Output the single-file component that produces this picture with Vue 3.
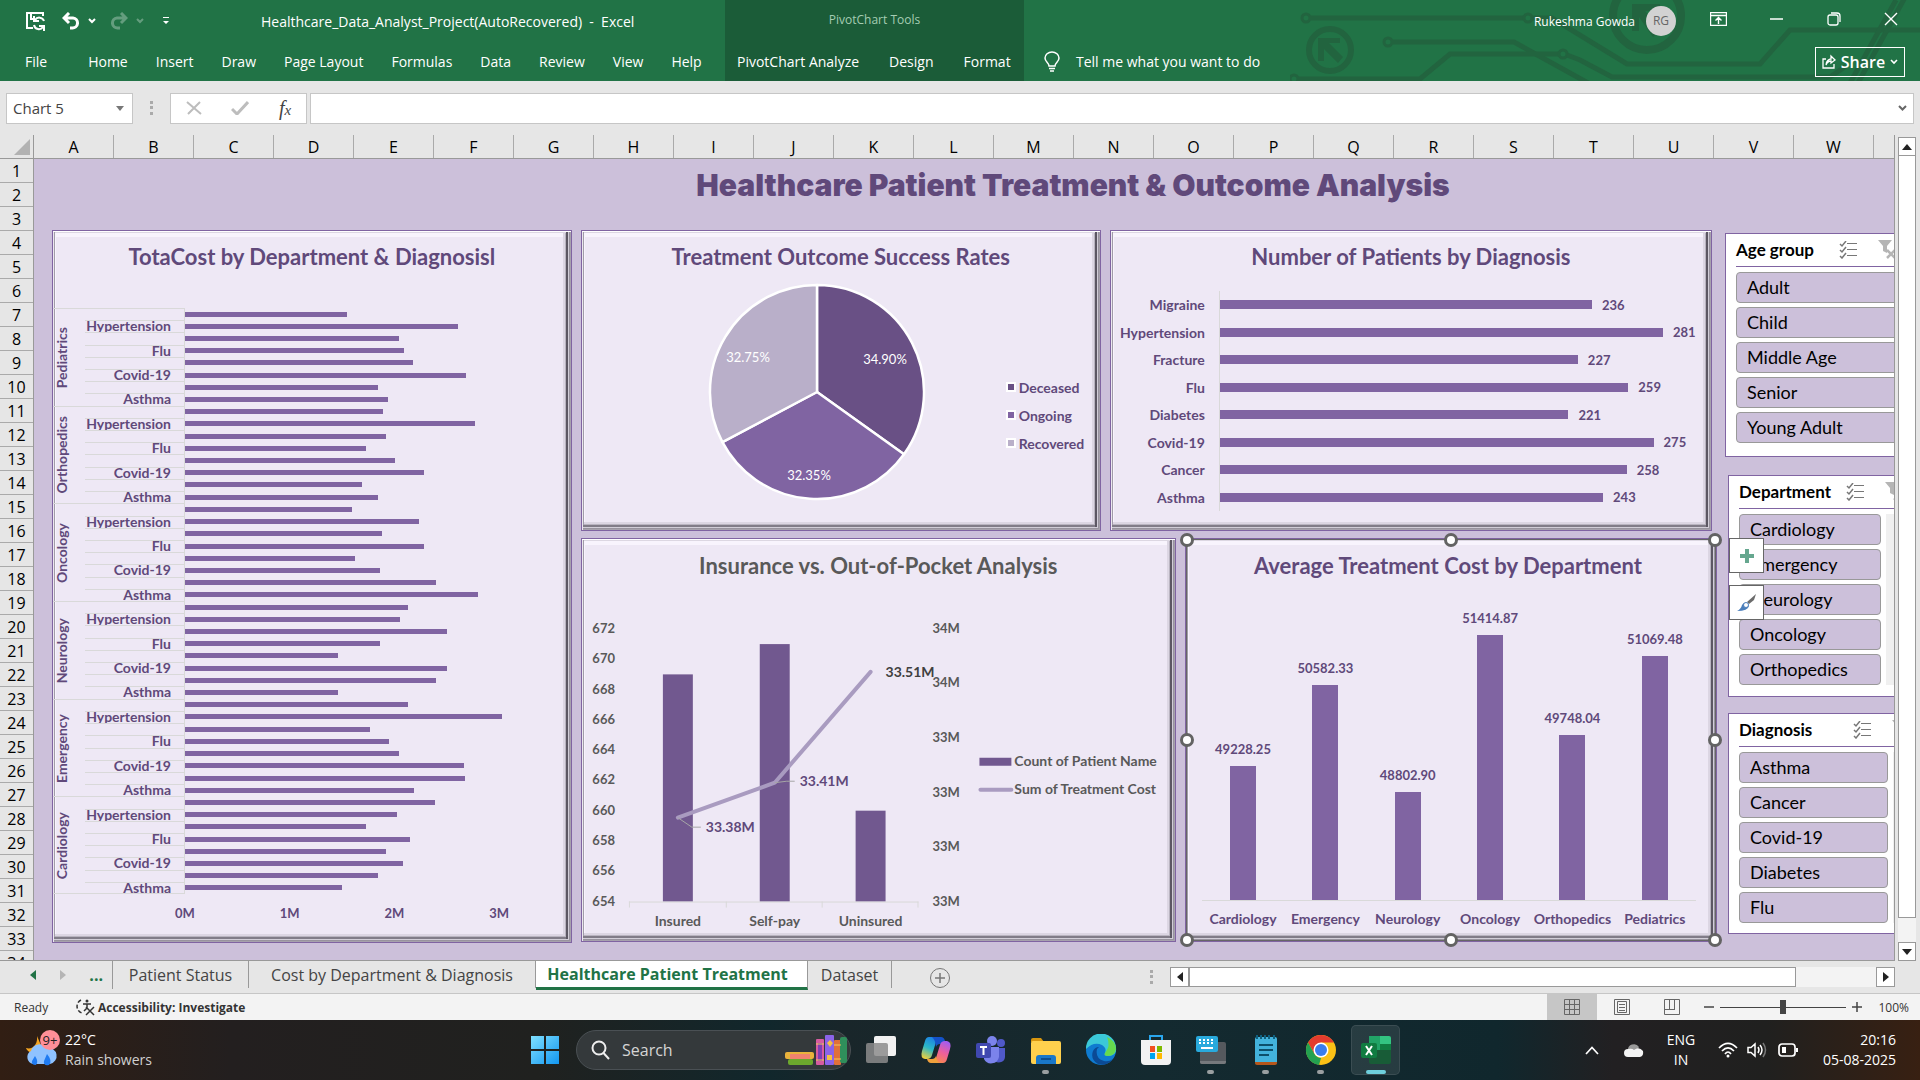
<script setup>
import { ref } from 'vue'

const mainTabs = ['File', 'Home', 'Insert', 'Draw', 'Page Layout', 'Formulas', 'Data', 'Review', 'View', 'Help']
const chartTabs = ['PivotChart Analyze', 'Design', 'Format']
const columns = 'ABCDEFGHIJKLMNOPQRSTUVW'.split('')
const zoom = ref(50)

const diagnoses = ['', 'Hypertension', '', 'Flu', '', 'Covid-19', '', 'Asthma']
const totalCost = [
  { name: 'Pediatrics', values: [1.55, 2.61, 2.04, 2.09, 2.18, 2.68, 1.84, 1.94] },
  { name: 'Orthopedics', values: [1.89, 2.77, 1.92, 1.73, 2.0, 2.28, 1.69, 1.84] },
  { name: 'Oncology', values: [1.59, 2.23, 1.88, 2.28, 1.62, 1.86, 2.4, 2.8] },
  { name: 'Neurology', values: [2.13, 2.05, 2.5, 1.86, 1.46, 2.5, 2.4, 1.46] },
  { name: 'Emergency', values: [2.13, 3.03, 1.77, 1.95, 2.04, 2.66, 2.67, 2.19] },
  { name: 'Cardiology', values: [2.39, 2.02, 1.73, 2.15, 1.92, 2.08, 1.84, 1.5] },
]

const outcomes = [
  { name: 'Deceased', share: 34.9, color: '#695085', x: 178, y: 82 },
  { name: 'Ongoing', share: 32.35, color: '#8064a2', x: 102, y: 198 },
  { name: 'Recovered', share: 32.75, color: '#b9afc9', x: 41, y: 80 },
]
let turned = 0
const point = (share) => {
  const a = (share / 100) * Math.PI * 2
  return `${(110 + 107 * Math.sin(a)).toFixed(1)} ${(110 - 107 * Math.cos(a)).toFixed(1)}`
}
const slices = outcomes.map((o) => {
  const from = point(turned)
  turned += o.share
  return { ...o, d: `M110 110L${from}A107 107 0 0 1 ${point(turned)}Z` }
})

const patients = [
  ['Migraine', 236], ['Hypertension', 281], ['Fracture', 227], ['Flu', 259],
  ['Diabetes', 221], ['Covid-19', 275], ['Cancer', 258], ['Asthma', 243],
]

const countTicks = [672, 670, 668, 666, 664, 662, 660, 658, 656, 654]
const costTicks = ['34M', '34M', '33M', '33M', '33M', '33M']
const payers = [
  { name: 'Insured', count: 669, x: 96 },
  { name: 'Self-pay', count: 671, x: 193 },
  { name: 'Uninsured', count: 660, x: 289 },
]
const barHeight = (count) => ((count - 654) * 273) / 18

const averages = [
  ['Cardiology', '49228.25'], ['Emergency', '50582.33'], ['Neurology', '48802.90'],
  ['Oncology', '51414.87'], ['Orthopedics', '49748.04'], ['Pediatrics', '51069.48'],
]
const averageHeight = (v) => ((Number(v) - 47000) / 5000) * 100

const slicers = [
  { title: 'Age group', kind: 'age', items: ['Adult', 'Child', 'Middle Age', 'Senior', 'Young Adult'] },
  { title: 'Department', kind: 'dept', items: ['Cardiology', 'Emergency', 'Neurology', 'Oncology', 'Orthopedics'] },
  { title: 'Diagnosis', kind: 'diag', items: ['Asthma', 'Cancer', 'Covid-19', 'Diabetes', 'Flu'] },
]
const handles = ['tl', 'tc', 'tr', 'ml', 'mr', 'bl', 'bc', 'br']
</script>

<template>
  <div class="app">
    <header class="ribbon">
      <svg class="circuit" width="630" height="81" viewBox="0 0 630 81" aria-hidden="true">
        <g fill="none" stroke="#22643f" stroke-width="5">
          <circle cx="16" cy="18" r="4" stroke-width="3" /><path d="M21 18H234" />
          <circle cx="238" cy="18" r="4" stroke-width="3" /><path d="M242 18H262L337 64H470L500 30H630" />
          <circle cx="40" cy="50" r="21" stroke-width="6" />
          <circle cx="98" cy="42" r="4" stroke-width="3" /><path d="M103 42H224L298 83" />
          <circle cx="4" cy="79" r="4" stroke-width="3" /><path d="M9 79H130L160 54H269" />
          <circle cx="273" cy="54" r="4" stroke-width="3" /><path d="M277 55L290 60L322 77H540L556 66M560 83L606 0M568 83L630 -30" />
          <circle cx="357" cy="16" r="34" stroke-width="8" />
        </g>
        <path fill="#22643f" d="M28 38h22v5H39l14 14-5 6-14-14v12h-6zM342 4h28v7h-15l15 20-7 6-14-20v14h-7z" />
      </svg>
      <div class="ribbon-main">
        <div class="title-row">
          <div class="quick">
            <button aria-label="Save"><svg width="22" height="20" viewBox="0 0 22 20" fill="none" stroke="#fff" stroke-width="2"><path d="M8 17H2V2H18V5M6 2V8H9" /><path d="M19 10A5 5 0 0 0 10 9M9 14A5 5 0 0 0 18 16M9 5V10H14M19 20V15H14" /></svg></button>
            <button aria-label="Undo"><svg width="18" height="18" viewBox="0 0 18 18" fill="none" stroke="#fff" stroke-width="3"><path d="M7 1L2 6L7 11M2 6H11A5 5 0 0 1 10 16H8" /></svg></button>
            <button aria-label="Undo list"><svg width="8" height="6" viewBox="0 0 8 6" fill="none" stroke="#fff" stroke-width="2"><path d="M1 1L4 4L7 1" /></svg></button>
            <button class="dim" aria-label="Redo"><svg width="18" height="18" viewBox="0 0 18 18" fill="none" stroke="#fff" stroke-width="3"><path d="M11 1L16 6L11 11M16 6H7A5 5 0 0 0 8 16H10" /></svg></button>
            <button class="dim" aria-label="Redo list"><svg width="8" height="6" viewBox="0 0 8 6" fill="none" stroke="#fff" stroke-width="2"><path d="M1 1L4 4L7 1" /></svg></button>
            <button aria-label="Customize"><svg width="8" height="8" viewBox="0 0 8 8"><path fill="#fff" d="M1 0H7V1H1zM1 4H7L4 7z" /></svg></button>
          </div>
          <span class="doc">Healthcare_Data_Analyst_Project(AutoRecovered)&nbsp; -&nbsp; Excel</span>
        </div>
        <nav class="tabs"><button v-for="t in mainTabs" :key="t">{{ t }}</button></nav>
      </div>
      <div class="ribbon-context">
        <div class="context-title">PivotChart Tools</div>
        <nav class="tabs"><button v-for="t in chartTabs" :key="t">{{ t }}</button></nav>
      </div>
      <div class="ribbon-right">
        <div class="window-row">
          <span class="user">Rukeshma Gowda</span>
          <span class="avatar">RG</span>
          <div class="window-buttons">
            <button aria-label="Ribbon display options"><svg width="17" height="14" viewBox="0 0 17 14" fill="none" stroke="#fff"><path d="M.5 .5H16.5V13.5H.5zM.5 3.5H16.5M8.5 12V6M5.5 8.5L8.5 5.5L11.5 8.5" stroke-width="1.4" /></svg></button>
            <button aria-label="Minimize"><svg width="14" height="14" viewBox="0 0 14 14"><path d="M0 7H13" stroke="#fff" stroke-width="1.5" /></svg></button>
            <button aria-label="Restore"><svg width="14" height="14" viewBox="0 0 14 14" fill="none" stroke="#fff" stroke-width="1.3"><rect x="1" y="3" width="10" height="10" rx="2" /><path d="M4 1H10A3 3 0 0 1 13 4V10" /></svg></button>
            <button aria-label="Close"><svg width="14" height="14" viewBox="0 0 14 14"><path d="M1 1L13 13M13 1L1 13" stroke="#fff" stroke-width="1.4" /></svg></button>
          </div>
        </div>
        <div class="tell-row">
          <svg width="16" height="21" viewBox="0 0 16 21" fill="none" stroke="#fff" stroke-width="1.5"><path d="M5 15C5 12 1 11 1 7A7 6 0 0 1 15 7C15 11 11 12 11 15zM5 17.500H11M6 20H10" /></svg>
          <span class="tell">Tell me what you want to do</span>
          <button class="share">
            <svg width="14" height="15" viewBox="0 0 14 15" fill="none" stroke="#fff" stroke-width="1.3"><path d="M4 5H1V14H12V10M4 11C4 7 7 5 9 5V2L13 6L9 9V7C7 7 5 8 4 11z" /></svg>
            Share
            <svg width="8" height="6" viewBox="0 0 8 6" fill="none" stroke="#fff" stroke-width="1.6"><path d="M1 1L4 4L7 1" /></svg>
          </button>
        </div>
      </div>
    </header>

    <section class="formula-bar">
      <div class="name-box">
        <input aria-label="Name box" value="Chart 5" />
        <svg width="8" height="5" viewBox="0 0 8 5"><path fill="#777" d="M0 0H8L4 5z" /></svg>
      </div>
      <svg class="grip" width="3" height="14" viewBox="0 0 3 14"><path fill="#aaa" d="M0 0h3v3H0zM0 5h3v3H0zM0 11h3v3H0z" /></svg>
      <div class="formula-buttons">
        <button aria-label="Cancel"><svg width="16" height="14" viewBox="0 0 16 14"><path d="M1 1L15 13M14 1L2 13" stroke="#bdbdbd" stroke-width="2" /></svg></button>
        <button aria-label="Enter"><svg width="18" height="14" viewBox="0 0 18 14"><path d="M1 8L6 13L17 1" fill="none" stroke="#bdbdbd" stroke-width="3" /></svg></button>
        <button class="fx" aria-label="Insert function">f<small>x</small></button>
      </div>
      <div class="formula-input">
        <input aria-label="Formula" />
        <svg width="9" height="6" viewBox="0 0 9 6"><path d="M1 1L4.500 4.500L8 1" fill="none" stroke="#666" stroke-width="2" /></svg>
      </div>
    </section>

    <main class="workbook">
      <div class="grid-area">
        <div class="col-head">
          <div class="corner"><svg width="16" height="16" viewBox="0 0 16 16"><path fill="#b2b2b2" d="M16 0V16H0z" /></svg></div>
          <div v-for="c in columns" :key="c" class="col">{{ c }}</div>
        </div>
        <div class="grid-body">
          <div class="row-head"><div v-for="r in 34" :key="r" class="row">{{ r }}</div></div>
          <div class="sheet">
            <h1>Healthcare Patient Treatment &amp; Outcome Analysis</h1>
            <div class="dashboard">
              <section class="panel total">
                <h2>TotaCost by Department &amp; Diagnosisl</h2>
                <div class="total-body">
                  <div v-for="g in totalCost" :key="g.name" class="group">
                    <div class="group-name"><span>{{ g.name }}</span></div>
                    <div class="group-rows">
                      <div v-for="(v, i) in g.values" :key="i" class="cost-row">
                        <div class="cost-label">{{ diagnoses[i] }}</div>
                        <div class="cost-track"><div class="cost-bar" :style="{ width: (v / 3.5) * 100 + '%' }"></div></div>
                      </div>
                    </div>
                  </div>
                </div>
                <div class="total-axis"><span>0M</span><span>1M</span><span>2M</span><span>3M</span></div>
              </section>

              <div class="charts">
                <div class="charts-top">
                  <section class="panel outcome">
                    <h2>Treatment Outcome Success Rates</h2>
                    <div class="pie-body">
                      <svg width="220" height="220" viewBox="0 0 220 220">
                        <path v-for="s in slices" :key="s.name" :d="s.d" :fill="s.color" stroke="#fff" stroke-width="2.500" stroke-linejoin="round" />
                        <text v-for="s in slices" :key="s.name" :x="s.x" :y="s.y" class="pie-label">{{ s.share.toFixed(2) }}%</text>
                      </svg>
                      <ul class="pie-legend">
                        <li v-for="s in slices" :key="s.name"><i :style="{ background: s.color }"></i>{{ s.name }}</li>
                      </ul>
                    </div>
                  </section>
                  <section class="panel patients">
                    <h2>Number of Patients by Diagnosis</h2>
                    <div class="patients-body">
                      <div v-for="[name, n] in patients" :key="name" class="patient-row">
                        <div class="patient-label">{{ name }}</div>
                        <div class="patient-track">
                          <div class="patient-bar" :style="{ width: (n / 300) * 100 + '%' }"></div><span>{{ n }}</span>
                        </div>
                      </div>
                    </div>
                  </section>
                </div>
                <div class="charts-bottom">
                  <section class="panel insurance">
                    <h2>Insurance vs. Out-of-Pocket Analysis</h2>
                    <svg class="combo" viewBox="0 0 594 345">
                      <text v-for="(t, i) in countTicks" :key="t" x="33" :y="42 + (i * 273) / 9" text-anchor="end">{{ t }}</text>
                      <text v-for="(t, i) in costTicks" :key="i" x="351" :y="42 + (i * 273) / 5">{{ t }}</text>
                      <g v-for="p in payers" :key="p.name">
                        <rect :x="p.x - 15" :y="311 - barHeight(p.count)" width="30" :height="barHeight(p.count)" fill="#71588f" />
                        <text class="name" :x="p.x" y="335" text-anchor="middle">{{ p.name }}</text>
                      </g>
                      <path d="M47 311.500H337M47.500 311V317M144.500 311V317M240.500 311V317M336.500 311V317" stroke="#d9d9d9" fill="none" />
                      <path d="M96 227L193 192L289 81" fill="none" stroke="#a99bc0" stroke-width="4" stroke-linecap="round" stroke-linejoin="round" />
                      <path d="M96 227L110 236.500H119M193 192L205 190.500H213" fill="none" stroke="#a6a6a6" />
                      <text class="violet" x="124" y="241">33.38M</text>
                      <text class="violet" x="218" y="195">33.41M</text>
                      <text class="dark" x="304" y="86">33.51M</text>
                      <rect x="398" y="167" width="32" height="8" fill="#71588f" />
                      <path d="M399 199H430" stroke="#a99bc0" stroke-width="4" stroke-linecap="round" />
                      <text class="name" x="433" y="175">Count of Patient Name</text>
                      <text class="name" x="433" y="203">Sum of Treatment Cost</text>
                    </svg>
                  </section>
                  <section class="panel average">
                    <h2>Average Treatment Cost by Department</h2>
                    <div class="average-body">
                      <div v-for="[name, v] in averages" :key="name" class="average-col">
                        <div class="average-plot">
                          <span>{{ v }}</span>
                          <div class="average-bar" :style="{ height: averageHeight(v) + '%' }"></div>
                        </div>
                        <div class="average-name">{{ name }}</div>
                      </div>
                    </div>
                    <div class="selection"><i v-for="h in handles" :key="h" :class="h"></i></div>
                    <div class="chart-tools">
                      <button aria-label="Chart elements"><svg width="14" height="14" viewBox="0 0 14 14"><path fill="#66a78f" d="M5 0h4v5h5v4H9v5H5V9H0V5h5z" /></svg></button>
                      <button aria-label="Chart styles"><svg width="20" height="18" viewBox="0 0 20 18"><path fill="#6b6b6b" d="M19 0L17 6L12 10L10 8z" /><path fill="#4a7ebb" d="M9 9L12 12Q11 17 0 17Q4 15 5 11Q7 8 9 9z" /><circle cx="9" cy="11" r="2.500" fill="#fff" stroke="#4a7ebb" /></svg></button>
                    </div>
                  </section>
                </div>
              </div>

              <aside class="slicers">
                <section v-for="s in slicers" :key="s.title" class="slicer" :class="s.kind">
                  <header>
                    <h3>{{ s.title }}</h3>
                    <button aria-label="Multi-select"><svg width="18" height="18" viewBox="0 0 18 18" fill="none" stroke="#777"><path d="M8 2.500H18M8 8.500H18M8 14.500H18" /><path d="M1 3L3 5L7 0M1 9L3 11L7 6M1 15L3 17L7 12" stroke-width="1.500" /></svg></button>
                    <button aria-label="Clear filter"><svg width="20" height="19" viewBox="0 0 20 19"><path fill="#b5b5b5" d="M0 0H14L9 6V13L5 11V6z" /><path d="M9 10L17 18M17 10L9 18" stroke="#b5b5b5" stroke-width="2.500" /></svg></button>
                  </header>
                  <div class="slicer-body">
                    <div class="slicer-list"><button v-for="i in s.items" :key="i">{{ i }}</button></div>
                    <div v-if="s.kind !== 'age'" class="slicer-scroll"></div>
                  </div>
                </section>
              </aside>
            </div>
          </div>
        </div>
      </div>
      <div class="vscroll">
        <button aria-label="Scroll up"><svg width="10" height="6" viewBox="0 0 10 6"><path fill="#222" d="M5 0L10 6H0z" /></svg></button>
        <div class="thumb"></div>
        <button aria-label="Scroll down"><svg width="10" height="6" viewBox="0 0 10 6"><path fill="#222" d="M0 0H10L5 6z" /></svg></button>
      </div>
    </main>

    <footer class="sheet-tabs">
      <div class="nav-arrows">
        <button aria-label="Previous sheet"><svg width="6" height="10" viewBox="0 0 6 10"><path fill="#217346" d="M6 0V10L0 5z" /></svg></button>
        <button aria-label="Next sheet"><svg width="6" height="10" viewBox="0 0 6 10"><path fill="#b5b5b5" d="M0 0V10L6 5z" /></svg></button>
        <button class="more" aria-label="More sheets">...</button>
      </div>
      <button class="tab status-tab">Patient Status</button>
      <button class="tab cost-tab">Cost by Department &amp; Diagnosis</button>
      <button class="tab active">Healthcare Patient Treatment</button>
      <button class="tab data-tab">Dataset</button>
      <button class="add" aria-label="New sheet"><svg width="22" height="22" viewBox="0 0 22 22" fill="none" stroke="#777"><circle cx="11" cy="11" r="9.500" /><path d="M11 6V16M6 11H16" stroke-width="1.500" /></svg></button>
      <div class="hscroll">
        <svg width="3" height="14" viewBox="0 0 3 14"><path fill="#aaa" d="M0 0h3v3H0zM0 5h3v3H0zM0 11h3v3H0z" /></svg>
        <div class="htrack">
          <button aria-label="Scroll left"><svg width="6" height="10" viewBox="0 0 6 10"><path fill="#222" d="M6 0V10L0 5z" /></svg></button>
          <div class="hthumb"></div>
          <button aria-label="Scroll right"><svg width="6" height="10" viewBox="0 0 6 10"><path fill="#222" d="M0 0V10L6 5z" /></svg></button>
        </div>
      </div>
    </footer>

    <div class="statusbar">
      <span class="ready">Ready</span>
      <svg width="20" height="18" viewBox="0 0 20 18" fill="none" stroke="#333" stroke-width="1.500"><path d="M5 2A7 7 0 0 0 6 15" stroke-dasharray="4 2" /><circle cx="11" cy="3" r="1.500" fill="#333" stroke="none" /><path d="M7 6H15M11 6V10L8 13M10 9L18 17M18 9L10 17" /></svg>
      <strong>Accessibility: Investigate</strong>
      <div class="views">
        <button class="on" aria-label="Normal view"><svg width="18" height="16" viewBox="0 0 18 16" fill="none" stroke="#666"><path d="M1.500 .5H16.500V15.500H1.500zM6.500 0V16M11.500 0V16M1 5.500H17M1 10.500H17" /></svg></button>
        <button aria-label="Page layout view"><svg width="18" height="16" viewBox="0 0 18 16" fill="none" stroke="#666"><path d="M1.500 .5H16.500V15.500H1.500zM4.500 2.500H13.500V13.500H4.500zM6 5.500H12M6 8.500H12M6 11.500H12" /></svg></button>
        <button aria-label="Page break view"><svg width="18" height="16" viewBox="0 0 18 16" fill="none" stroke="#666"><path d="M1.500 .5H16.500V15.500H1.500zM6.500 0V10.500M11.500 0V10.500M2 10.500H12" /></svg></button>
      </div>
      <button class="zoom-btn" aria-label="Zoom out"><svg width="10" height="10" viewBox="0 0 10 10"><path d="M0 5H10" stroke="#444" stroke-width="1.500" /></svg></button>
      <input v-model="zoom" type="range" min="0" max="100" aria-label="Zoom" />
      <button class="zoom-btn" aria-label="Zoom in"><svg width="10" height="10" viewBox="0 0 10 10"><path d="M0 5H10M5 0V10" stroke="#444" stroke-width="1.500" /></svg></button>
      <span class="percent">100%</span>
    </div>

    <div class="taskbar">
      <div class="weather">
        <svg width="36" height="40" viewBox="0 0 36 40"><path fill="#f5a623" d="M12 6C13 14 8 20 1 18C3 24 14 26 18 20z" /><path fill="#8fc2ff" d="M8 34A7 7 0 0 1 6 21A9 9 0 0 1 22 18A8 8 0 0 1 25 34z" /><path fill="#1f7bf2" d="M10 26Q14 32 11 35Q6 35 7 31zM22 24Q28 31 24 35Q18 36 19 31z" /><circle cx="25" cy="10" r="10" fill="#ff8f98" /><text x="25" y="15" text-anchor="middle" font-size="13" fill="#222">9+</text></svg>
        <div><div>22°C</div><div class="soft">Rain showers</div></div>
      </div>
      <div class="apps">
        <button class="start" aria-label="Start"><svg width="30" height="30" viewBox="0 0 30 30"><defs><linearGradient id="win" x1="0" y1="0" x2="1" y2="1"><stop offset="0" stop-color="#7fe0ff" /><stop offset="1" stop-color="#1296f0" /></linearGradient></defs><path fill="url(#win)" d="M1 1h13v13H1zM16 1h13v13H16zM1 16h13v13H1zM16 16h13v13H16z" /></svg></button>
        <div class="search">
          <svg width="19" height="20" viewBox="0 0 19 20" fill="none" stroke="#eee" stroke-width="2"><circle cx="8" cy="8" r="6.500" /><path d="M12.500 13L18 19" /></svg>
          <input aria-label="Search" placeholder="Search" />
          <svg width="62" height="30" viewBox="0 0 62 30"><rect x="0" y="17" width="29" height="7" rx="2" fill="#e9b23c" /><rect x="5" y="19" width="20" height="5" fill="#f0826f" /><rect x="3" y="24" width="25" height="6" rx="2" fill="#6ca82d" /><rect x="31" y="4" width="8" height="26" rx="1" fill="#d75ba0" /><rect x="33" y="8" width="4" height="18" fill="#7f3fb5" /><rect x="40" y="0" width="9" height="30" rx="1" fill="#8b63e8" /><path fill="#f5c242" d="M42 8l3-3 3 3-3 4zM42 20h5v5h-5z" /><rect x="49" y="5" width="7" height="25" rx="1" fill="#e0703a" /><rect x="55" y="2" width="7" height="26" rx="2" fill="#2f8f5b" /><path stroke="#f4c95b" d="M49 10h7M49 24h7M31 9h8M31 25h8" /></svg>
        </div>
        <button aria-label="Task view"><svg width="32" height="32" viewBox="0 0 32 32"><rect x="9" y="2" width="22" height="20" rx="2" fill="#f1f1f1" /><rect x="1" y="9" width="22" height="20" rx="2" fill="#8c8c8c" opacity=".85" /></svg></button>
        <button aria-label="Copilot">
          <svg width="32" height="32" viewBox="0 0 32 32">
            <defs>
              <linearGradient id="cop-a" x1="0.6" y1="0" x2="0.2" y2="1"><stop offset="0" stop-color="#1c7fe6" /><stop offset=".5" stop-color="#2bb8c8" /><stop offset="1" stop-color="#f2d03a" /></linearGradient>
              <linearGradient id="cop-b" x1="0.7" y1="0" x2="0.3" y2="1"><stop offset="0" stop-color="#a25cf0" /><stop offset=".5" stop-color="#ee5f9b" /><stop offset="1" stop-color="#f98a4a" /></linearGradient>
            </defs>
            <path fill="url(#cop-a)" d="M9 3h11q-3 1-4 5l-4 13q-1 4-5 4H5q-5-1-3-8l3-10q1-4 4-4z" />
            <path fill="#1552c8" d="M12 3h9q3 0 4 4l1 3h-6q-3 0-4 3-1-8-4-10z" />
            <path fill="url(#cop-b)" d="M23 29H12q3-1 4-5l4-13q1-4 5-4h2q5 1 3 8l-3 10q-1 4-4 4z" />
            <path fill="#f0a03c" d="M20 29h-9q-3 0-4-4h5q3 0 4-3 1 6 4 7z" />
          </svg>
        </button>
        <button aria-label="Teams"><svg width="32" height="32" viewBox="0 0 32 32"><circle cx="17" cy="7" r="5" fill="#7b83eb" /><circle cx="26" cy="9" r="4" fill="#5059c9" /><path fill="#5059c9" d="M20 14h10v9a6 6 0 0 1-10 4z" /><path fill="#7b83eb" d="M9 13h15v10a8 8 0 0 1-15 2z" /><rect x="1" y="9" width="15" height="15" rx="2" fill="#4048b0" /><path d="M5 13h7M8.500 13v8" stroke="#fff" stroke-width="2" /></svg></button>
        <button class="run" aria-label="File Explorer"><svg width="32" height="32" viewBox="0 0 32 32"><path fill="#d8960f" d="M1 6q0-2 2-2h8l3 4H1z" /><rect x="1" y="7" width="30" height="23" rx="2" fill="#ffd04d" /><path fill="#1a78c9" d="M6 30v-6q0-3 3-3h14q3 0 3 3v6z" /><path d="M11 25h10" stroke="#0c4f91" stroke-width="2" /></svg></button>
        <button aria-label="Edge"><svg width="32" height="32" viewBox="0 0 32 32"><circle cx="16" cy="16" r="15" fill="#0f7bd0" /><path fill="#3bc8d8" d="M1 15A15 15 0 0 1 31 14q1 7-7 8-5 0-4-3 2-5-3-8-8-4-16 4z" /><path fill="#66d94e" d="M22 3q9 4 9 12-1 7-8 7-5 0-3-3 6-7 2-16z" /><path fill="#0b4a95" d="M12 15q-2 10 7 12 5 1 9-2-7 8-15 5-8-5-5-13 2-4 6-4z" /></svg></button>
        <button aria-label="Store"><svg width="32" height="32" viewBox="0 0 32 32"><path d="M10 6V2H22V6" fill="none" stroke="#2aa7ee" stroke-width="2" /><path fill="#f2f2f2" d="M1 6h30v21q0 4-4 4H5q-4 0-4-4z" /><path fill="#f25022" d="M10 12h5v6h-5z" /><path fill="#7fba00" d="M17 12h5v6h-5z" /><path fill="#00a4ef" d="M10 19h5v6h-5z" /><path fill="#ffb900" d="M17 19h5v6h-5z" /></svg></button>
        <button class="run" aria-label="On-screen keyboard"><svg width="32" height="32" viewBox="0 0 32 32"><rect x="5" y="8" width="26" height="22" rx="2" fill="#55595e" /><path fill="#76797d" d="M5 27h26v1q0 2-2 2H7q-2 0-2-2z" /><rect x="1" y="2" width="22" height="16" rx="2" fill="#29a9dc" /><path d="M4 6h16M4 9h16" stroke="#fff" stroke-width="2" stroke-dasharray="2 2" /><path d="M6 14h12" stroke="#fff" stroke-width="2" /></svg></button>
        <button class="run" aria-label="Notepad"><svg width="32" height="32" viewBox="0 0 32 32"><rect x="5" y="3" width="22" height="27" rx="2" fill="#43b3dc" /><path fill="#b5561b" d="M5 28h22v1q0 2-2 2H7q-2 0-2-2z" /><path d="M7 1v4M11 1v4M15 1v4M19 1v4M24 1v4" stroke="#0f607f" stroke-width="2" /><path d="M9 11h14M9 16h14M9 21h10" stroke="#0d506b" stroke-width="2" /></svg></button>
        <button class="run" aria-label="Chrome"><svg width="32" height="32" viewBox="0 0 32 32"><circle cx="16" cy="16" r="15" fill="#fbc116" /><path fill="#e33b2e" d="M3 8.500A15 15 0 0 1 29 8.500H16L9.500 20z" /><path fill="#23a150" d="M3 8.500L9.500 20Q12 24 16 24L14 31A15 15 0 0 1 3 8.500z" /><circle cx="16" cy="16" r="7.500" fill="#fff" /><circle cx="16" cy="16" r="6" fill="#3b7ded" /></svg></button>
        <button class="run current" aria-label="Excel"><svg width="32" height="32" viewBox="0 0 32 32"><path fill="#21a366" d="M9 2h11v14H9z" /><path fill="#33c481" d="M20 2h9q2 0 2 2v6H20z" /><path fill="#107c41" d="M20 10h11v8H20z" /><path fill="#185c37" d="M9 16h22v12q0 2-2 2H11q-2 0-2-2z" /><rect x="1" y="9" width="16" height="15" rx="2" fill="#107c41" /><path d="M6 12l6 9M12 12l-6 9" stroke="#fff" stroke-width="2" /></svg></button>
      </div>
      <div class="tray">
        <svg width="14" height="9" viewBox="0 0 14 9" fill="none" stroke="#fff" stroke-width="1.700"><path d="M1 8L7 1.500L13 8" /></svg>
        <svg class="cloud" width="21" height="14" viewBox="0 0 21 14"><path fill="#9a9a9a" d="M5 8A6 6 0 0 1 16 4L13 9z" /><path fill="#f4f4f4" d="M5 14A4 4 0 0 1 5 6Q9 5 11 7Q16 3 20 8Q21 13 17 14z" /></svg>
        <div class="lang"><div>ENG</div><div>IN</div></div>
        <svg width="20" height="16" viewBox="0 0 20 16" fill="none" stroke="#fff" stroke-width="1.700"><path d="M1 6Q10-3 19 6M4 9Q10 3 16 9M7 12Q10 8 13 12" /><circle cx="10" cy="14" r="1.500" fill="#fff" stroke="none" /></svg>
        <svg class="sound" width="20" height="16" viewBox="0 0 20 16" fill="none" stroke="#fff" stroke-width="1.500"><path d="M1 5.500H4L8 2V14L4 10.500H1zM11 5Q13 8 11 11M13 3Q17 8 13 13" /><path d="M16 1Q21 8 16 15" stroke="#777" /></svg>
        <svg class="battery" width="21" height="14" viewBox="0 0 21 14" fill="none" stroke="#fff" stroke-width="1.700"><rect x="1" y="1" width="16" height="12" rx="3" /><path d="M19 5V9" stroke-width="2" /><rect x="4" y="4" width="4" height="6" fill="#fff" stroke="none" /></svg>
        <div class="clock"><div>20:16</div><div>05-08-2025</div></div>
      </div>
    </div>
  </div>
</template>

<style>
body { margin: 0; background: #e6e6e6; }
</style>

<style scoped>
* { box-sizing: border-box; }
.app { display: flex; flex-direction: column; min-height: 100vh; font-family: "Open Sans", "Noto Sans", sans-serif; color: #222; overflow: hidden; }
button { border: 0; background: none; padding: 0; margin: 0; font: inherit; color: inherit; display: flex; align-items: center; justify-content: center; }
input { font: inherit; color: inherit; border: 0; background: none; min-width: 0; outline: none; }
h1, h2, h3, ul { margin: 0; padding: 0; }
svg { flex-shrink: 0; }

.ribbon { position: relative; display: flex; height: 81px; background: #217346; color: #fff; font-size: 14px; }
.circuit { position: absolute; right: 0; top: 0; }
.ribbon-main { width: 725px; }
.ribbon-context { width: 299px; background: #1b5c38; }
.ribbon-right { position: relative; flex: 1; }
.title-row { display: flex; height: 42px; align-items: center; padding-left: 25px; }
.quick { display: flex; align-items: center; width: 236px; }
.quick button { margin-right: 8px; }
.quick button:nth-child(1) { margin-right: 15px; }
.quick button:nth-child(3) { margin-right: 14px; }
.quick button:nth-child(5) { margin-right: 18px; }
.dim { opacity: .3; }
.doc { white-space: nowrap; }
.tabs { display: flex; height: 39px; align-items: center; padding-left: 11px; }
.tabs button { padding: 0 14px; height: 39px; white-space: nowrap; }
.ribbon-main .tabs button:first-child { margin-right: 13px; }
.ribbon-context .tabs { padding-left: 0; gap: 6px; }
.ribbon-context .tabs button { padding: 0 12px; }
.context-title { height: 42px; line-height: 40px; text-align: center; font-size: 12px; color: #a5cdb3; }
.window-row { display: flex; align-items: center; justify-content: flex-end; height: 42px; padding-right: 22px; }
.user { font-size: 12px; }
.avatar { width: 30px; height: 30px; border-radius: 50%; background: #d2d2d2; color: #666; font-size: 12px; line-height: 30px; text-align: center; margin-left: 11px; }
.window-buttons { display: flex; align-items: center; gap: 43px; margin-left: 34px; height: 38px; align-self: flex-start; }
.tell-row { display: flex; align-items: center; height: 39px; padding: 0 15px 0 20px; }
.tell { margin-left: 16px; flex: 1; }
.share { width: 90px; height: 30px; border: 1px solid #fff; font-size: 16px; font-weight: 600; gap: 5px; }

.formula-bar { display: flex; align-items: center; height: 54px; padding: 0 6px; background: #e6e6e6; font-size: 15px; color: #444; }
.name-box { display: flex; align-items: center; width: 127px; height: 31px; border: 1px solid #c6c6c6; background: #fff; padding: 0 8px 0 6px; }
.name-box input { flex: 1; padding: 0; }
.grip { margin: 0 17px; }
.formula-buttons { display: flex; align-items: center; justify-content: space-around; width: 137px; height: 31px; border: 1px solid #c6c6c6; background: #fff; }
.fx { font-family: "Liberation Serif", serif; font-style: italic; font-size: 20px; color: #444; }
.fx small { font-size: 15px; padding-top: 5px; }
.formula-input { flex: 1; display: flex; align-items: center; height: 31px; border: 1px solid #c6c6c6; background: #fff; margin-left: 3px; padding-right: 6px; }
.formula-input input { flex: 1; }

.workbook { flex: 1; display: flex; background: #e6e6e6; height: 826px; }
.grid-area { flex: 1; min-width: 0; border-right: 1px solid #999; overflow: hidden; }
.col-head { display: flex; height: 24px; font-size: 16px; line-height: 24px; color: #000; border-bottom: 1px solid #999; overflow: hidden; }
.corner { width: 34px; flex: none; padding: 4px 0 0 14px; line-height: 0; border-right: 1px solid #999; }
.col { width: 80px; flex: none; text-align: center; border-right: 1px solid #aaa; }
.grid-body { display: flex; height: 802px; overflow: hidden; border-bottom: 1px solid #999; }
.row-head { width: 34px; flex: none; border-right: 1px solid #999; font-size: 16px; color: #000; }
.row { height: 24px; line-height: 25px; text-align: center; border-bottom: 1px solid #aaa; }
.sheet { flex: 1; min-width: 0; background: #ccc0da; overflow: hidden; }
h1 { height: 71px; line-height: 52px; padding-left: 218px; text-align: center; white-space: nowrap; font-family: Inter, sans-serif; font-weight: 900; font-size: 30px; color: #60497a; }
.dashboard { display: grid; grid-template-columns: minmax(0, 520fr) minmax(0, 1154fr) 169px; align-items: start; padding-left: 18px; }

.panel { position: relative; background: #eee8f5; border: 1px solid #8064a2; display: flex; flex-direction: column; font: bold 14px Lato, sans-serif; color: #60497a;
  box-shadow: inset 0 1px 0 #fff, inset 1px 0 0 #ece8f0, inset -1px -1px 0 #a6a1ac, inset -2px -2px 0 #98939e, inset -3px -3px 0 #d2ced8, inset -5px 0 0 #5c5763, inset 0 -5px 0 #817c88, inset 2px 0 0 #a19ca8, inset 0 2px 0 #dcd7e2, inset -6px -6px 0 #b9b4c0, inset -8px -8px 0 #dcd6e3, inset 3px 6px 0 #f8f4fd; }
h2 { margin-top: 13px; font-size: 22px; line-height: 26px; text-align: center; white-space: nowrap; }
.total { height: 713px; }
.total-body { height: 586px; margin: 38px 19px 0 0; display: flex; flex-direction: column; }
.group { flex: 1; display: flex; min-height: 0; }
.group-name { width: 32px; border-top: 1px solid #d9d9d9; display: flex; align-items: center; }
.group-name span { writing-mode: vertical-rl; transform: rotate(180deg); line-height: 18px; }
.group-rows { flex: 1; display: flex; flex-direction: column; }
.cost-row { flex: 1; display: flex; min-height: 0; }
.cost-label { width: 100px; border-top: 1px solid #d9d9d9; border-right: 1px solid #d9d9d9; text-align: right; padding-right: 13px; line-height: 10px; height: 100%; }
.group:last-child .group-name, .group:last-child .cost-row:last-child .cost-label { border-bottom: 1px solid #d9d9d9; }
.cost-track { flex: 1; display: flex; align-items: center; }
.cost-bar { height: 5px; background: #8064a2; }
.total-axis { display: flex; margin: 9px 19px 0 132px; line-height: 20px; font-size: 13px; }
.total-axis span { flex: none; width: calc(100% / 3.5); text-indent: -10px; }

.charts { margin: 0 8px 0 9px; display: flex; flex-direction: column; gap: 7px; position: relative; z-index: 2; }
.charts-top { display: grid; grid-template-columns: minmax(0, 520fr) minmax(0, 602fr); gap: 9px; padding-right: 5px; height: 301px; }
.charts-bottom { display: grid; grid-template-columns: minmax(0, 595fr) minmax(0, 532fr); gap: 9px; height: 404px; }
.pie-body { display: flex; align-items: center; margin-top: 12px; padding-left: 125px; }
.pie-label { font: 13px Lato, sans-serif; fill: #fff; text-anchor: middle; }
.pie-legend { list-style: none; margin: 46px 0 0 79px; }
.pie-legend li { display: flex; align-items: center; height: 28px; }
.pie-legend i { width: 10px; height: 10px; border: 2px solid #fff; margin-right: 3px; }
.patients-body { height: 220px; margin-top: 21px; display: flex; flex-direction: column; padding-right: 18px; }
.patient-row { flex: 1; display: flex; align-items: center; }
.patient-label { width: 108px; text-align: right; padding-right: 14px; }
.patient-track { flex: 1; align-self: stretch; display: flex; align-items: center; border-left: 1px solid #d9d9d9; font-size: 13px; }
.patient-bar { height: 9px; background: #8064a2; }
.patient-track span { margin-left: 10px; width: 0; }
.charts-bottom h2 { margin-top: 14px; }
.insurance h2 { color: #595959; }
.combo { width: 100%; margin-top: 12px; display: block; }
.combo text { fill: #595959; font-size: 13px; }
.combo .name { font-size: 14px; }
.combo .violet { fill: #60497a; font-size: 14px; }
.combo .dark { fill: #404040; font-size: 14px; }
.average h2 { margin-right: 6px; }
.average-body { display: flex; margin: 21px 20px 0 16px; }
.average-col { flex: 1; min-width: 0; display: flex; flex-direction: column; align-items: stretch; }
.average-plot { height: 301px; display: flex; flex-direction: column; justify-content: flex-end; align-items: center; border-bottom: 1px solid #d9d9d9; font-size: 13px; }
.average-plot span { line-height: 18px; margin-bottom: 8px; }
.average-bar { width: 26px; background: #8064a2; flex-shrink: 0; }
.average-name { line-height: 18px; margin-top: 9px; display: flex; justify-content: center; white-space: nowrap; }
.selection { position: absolute; inset: 0; border: 1px solid #666; pointer-events: none; }
.selection i { position: absolute; width: 14px; height: 14px; border: 3px solid #636363; border-radius: 50%; background: #fff; transform: translate(-50%, -50%); }
.tl, .ml, .bl { left: 0; }
.tc, .bc { left: 50%; }
.tr, .mr, .br { left: 100%; }
.tl, .tc, .tr { top: 0; }
.ml, .mr { top: 50%; }
.bl, .bc, .br { top: 100%; }
.chart-tools { position: absolute; left: 100%; top: -1px; margin-left: 13px; display: flex; flex-direction: column; gap: 12px; }
.chart-tools button { width: 35px; height: 35px; background: #fff; border: 1px solid #666; }

.slicers { padding-top: 3px; }
.slicer { background: #fff; border: 1px solid #8064a2; color: #000; font: 18px Lato, "Open Sans", sans-serif; padding: 0 10px; }
.age { width: 184px; height: 224px; margin-bottom: 18px; }
.dept { width: 188px; height: 222px; margin: 0 0 16px 3px; }
.diag { width: 195px; height: 221px; margin-left: 3px; }
.slicer header { display: flex; align-items: center; height: 33px; border-bottom: 1px solid #8064a2; padding-bottom: 1px; }
.slicer h3 { flex: 1; font-size: 17px; font-weight: bold; white-space: nowrap; }
.slicer header button + button { margin-left: 21px; }
.slicer-body { display: flex; gap: 5px; margin-top: 5px; height: 171px; overflow: hidden; }
.slicer-list { flex: 1; display: flex; flex-direction: column; gap: 4px; }
.slicer-list button { flex: none; height: 31px; justify-content: flex-start; padding: 0 0 2px 10px; background: #ccc0da; border: 1px solid #999; border-radius: 4px; }
.slicer-scroll { width: 19px; background: #f0f0f0; }

.vscroll { width: 25px; display: flex; flex-direction: column; padding: 2px 4px 0 3px; }
.vscroll button { height: 19px; flex: none; background: #fff; border: 1px solid #999; }
.thumb { flex: 1; background: #fff; border: 1px solid #999; border-top: 0; margin-bottom: 24px; box-shadow: 0 24px 0 #f3f3f3; }

.sheet-tabs { display: flex; height: 33px; background: #e6e6e6; border-bottom: 1px solid #c6c6c6; font-size: 16px; color: #444; align-items: flex-start; }
.nav-arrows { display: flex; width: 113px; height: 28px; padding: 0 9px 0 30px; justify-content: space-between; border-right: 1px solid #999; }
.more { color: #217346; font-weight: bold; }
.tab { height: 27px; white-space: nowrap; border-right: 1px solid #999; }
.status-tab { width: 136px; }
.cost-tab { width: 287px; }
.active { width: 272px; height: 29px; padding: 0 8px 0 0; background: #fff; border-bottom: 3px solid #217346; color: #217346; font-weight: bold; }
.data-tab { width: 84px; }
.add { margin: 6px 0 0 37px; }
.hscroll { margin: 6px 25px 0 auto; display: flex; align-items: center; gap: 17px; width: 745px; }
.htrack { flex: 1; display: flex; height: 20px; background: #f3f3f3; }
.htrack button { width: 19px; background: #fff; border: 1px solid #999; }
.hthumb { flex: 1; background: #fff; border: 1px solid #999; margin-right: 80px; }

.statusbar { display: flex; align-items: center; height: 26px; background: #f3f3f3; font-size: 12px; padding: 0 11px 0 14px; color: #333; }
.ready { width: 62px; }
.statusbar strong { margin-left: 2px; font-weight: bold; }
.views { display: flex; margin-left: auto; margin-right: 7px; }
.views button { width: 50px; height: 26px; }
.views .on { background: #c6c6c6; }
.zoom-btn { width: 10px; }
.statusbar input { appearance: none; width: 126px; height: 16px; margin: 0 6px; padding: 0; background: linear-gradient(#444, #444) center / 100% 1px no-repeat; }
.statusbar input::-webkit-slider-thumb { appearance: none; width: 6px; height: 14px; background: #444; }
.percent { margin-left: 16px; }

.taskbar { display: flex; align-items: center; height: 60px; color: #fff; font-size: 14px; line-height: 20px; background: linear-gradient(90deg, #311e13, #231f1f 12%, #20211f 28%, #11272c 40%, #19262a 44%, #142a30 60%, #10272d 78%, #222022 84%, #20201f 92%, #382012); }
.weather { display: flex; gap: 4px; width: 530px; padding-left: 25px; }
.soft { color: #d0d0d0; }
.apps { display: flex; align-items: center; }
.apps > button { width: 55px; height: 50px; position: relative; }
.apps > .start { width: 30px; }
.search { display: flex; align-items: center; width: 275px; height: 40px; margin: 0 2px 0 16px; border: 1px solid #4a5054; border-radius: 20px; background: #34393b; padding: 0 3px 0 14px; font-size: 16px; }
.search input { flex: 1; padding: 0 0 0 12px; }
.search input::placeholder { color: #d5d5d5; opacity: 1; }
.run::after { content: ""; position: absolute; bottom: 1px; width: 7px; height: 4px; border-radius: 2px; background: #9a9fa1; }
.current::before { content: ""; position: absolute; inset: 0 3px; border-radius: 5px; background: #ffffff18; border: 1px solid #ffffff18; }
.current svg { position: relative; }
.current::after { width: 20px; background: #6ecfdc; }
.tray { display: flex; align-items: center; margin-left: auto; padding-right: 24px; }
.cloud { margin-left: 24px; }
.lang { width: 74px; text-align: center; }
.sound { margin-left: 9px; }
.battery { margin-left: 11px; }
.clock { width: 97px; text-align: right; }
</style>
